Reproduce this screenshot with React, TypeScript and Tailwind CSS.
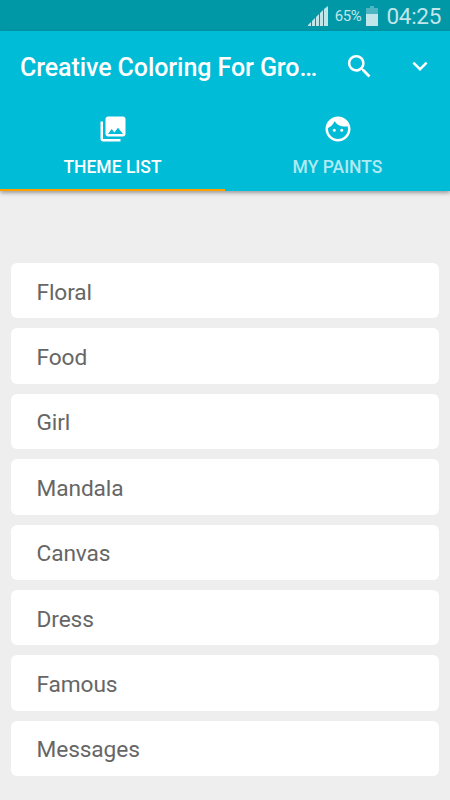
import React from "react";
import { MdSearch, MdExpandMore, MdPhotoLibrary, MdFace } from "react-icons/md";

const themes = ["Floral", "Food", "Girl", "Mandala", "Canvas", "Dress", "Famous", "Messages"];

function StatusBar() {
  return (
    <div className="flex h-[31px] items-center justify-end bg-[#0097a7] pr-[9px] text-[#c0e6ea]">
      <svg width="20" height="20" viewBox="0 0 20 20" fill="currentColor" className="mr-[7px]">
        <path d="M0 20v-1l3-3v4zM4 20v-5l3-3v8zM8 20v-9l3-3v12zM12 20v-13l3-3v16zM16 20v-17l4-3v20z" />
      </svg>
      <span className="mr-[5px] pt-[1px] text-[15px] tracking-[-0.4px]">65%</span>
      <svg width="12" height="20" viewBox="0 0 12 20" fill="currentColor" className="mr-[8px]">
        <path d="M4 0h4v2h4v6H0V2h4z" opacity=".4" />
        <path d="M0 8h12v12H0z" />
      </svg>
      <span className="pt-[2px] text-[22.500px] tracking-[-0.3px]">04:25</span>
    </div>
  );
}

export default function App() {
  return (
    <div className="h-[800px] w-[450px] overflow-hidden bg-[#eeeeee] font-['Roboto',sans-serif]">
      <StatusBar />
      <header className="h-[160px] bg-[#00bcd7] text-white shadow-[0_2px_4px_rgba(0,0,0,0.35)]">
        <div className="flex h-[70px] items-center pl-5">
          <h1 className="w-[324px] whitespace-nowrap pt-[3px] text-[25px] font-medium tracking-[-0.08px]">Creative Coloring For Gro…</h1>
          <MdSearch size={31} />
          <MdExpandMore size={30} className="ml-[30px]" />
        </div>
        <nav className="grid h-[90px] grid-cols-2 text-[17.500px] font-medium">
          <div className="flex flex-col items-center border-b-2 border-[#ffa000] pt-[13px]">
            <MdPhotoLibrary size={30} />
            <span className="mt-[10px] leading-[27px]">THEME LIST</span>
          </div>
          <div className="flex flex-col items-center pt-[13px]">
            <MdFace size={30} />
            <span className="mt-[10px] leading-[27px] text-white/70">MY PAINTS</span>
          </div>
        </nav>
      </header>
      <main className="flex flex-col gap-[10px] px-[11px] pt-[72px]">
        {themes.map((theme) => (
          <div key={theme} className="flex h-[55.400px] shrink-0 items-center rounded-[6px] bg-white pl-[25.500px] pt-[4px] text-[22.700px] tracking-[-0.1px] text-[#666666]">
            {theme}
          </div>
        ))}
      </main>
    </div>
  );
}
